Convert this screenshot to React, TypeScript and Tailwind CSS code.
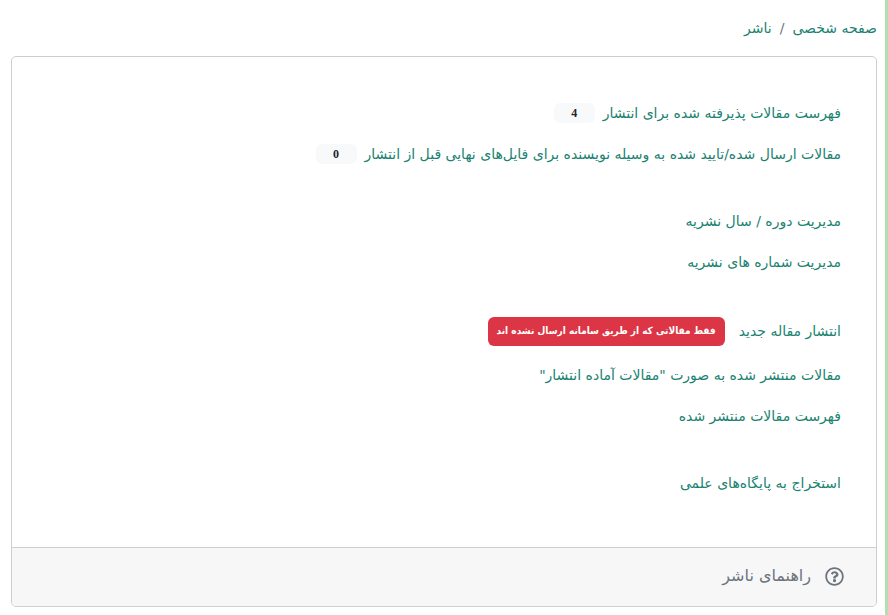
import {FaRegQuestionCircle} from "react-icons/fa";

type MenuItem = {
    text: string;
    count?: number;
    note?: string;
};

const menuGroups: MenuItem[][] = [
    [
        {text: "فهرست مقالات پذیرفته شده برای انتشار", count: 4},
        {text: "مقالات ارسال شده/تایید شده به وسیله نویسنده برای فایل‌های نهایی قبل از انتشار", count: 0},
    ],
    [
        {text: "مدیریت دوره / سال نشریه"},
        {text: "مدیریت شماره های نشریه"},
    ],
    [
        {text: "انتشار مقاله جدید", note: "فقط مقالاتی که از طریق سامانه ارسال نشده اند"},
        {text: "مقالات منتشر شده به صورت \"مقالات آماده انتشار\""},
        {text: "فهرست مقالات منتشر شده"},
    ],
    [
        {text: "استخراج به پایگاه‌های علمی"},
    ],
];

const MenuRow = ({text, count, note}: MenuItem) => (
    <li className={note ? "flex h-[46px] items-center gap-[14px]" : "flex h-[41px] items-center gap-2"}>
        <a href="#" className="whitespace-nowrap text-[#1a8270]">{text}</a>
        {count !== undefined && (
            <span
                className="flex h-5 w-[41px] items-center justify-center rounded-md bg-[#f8f9fa] font-['Liberation_Serif',serif] text-xs font-bold text-[#212529]">
                {count}
            </span>
        )}
        {note && (
            <button type="button"
                    className="h-[29px] whitespace-nowrap rounded-md bg-[#dc3545] px-[9px] font-['DejaVu_Sans_Condensed','DejaVu_Sans',sans-serif] text-[10px] font-bold text-white">
                {note}
            </button>
        )}
    </li>
);

const App = () => {
    return (
        <div dir="rtl"
             className="min-h-screen border-r-[3px] border-[#b1dfb1] bg-white pr-2 pl-[11px] font-['DejaVu_Sans',sans-serif] text-sm">
            <nav className="flex h-14 items-center gap-2 text-[#1a8270]">
                <a href="#">صفحه شخصی</a>
                <span className="text-[#6c757d]">/</span>
                <a href="#">ناشر</a>
            </nav>

            <main className="overflow-hidden rounded-[5px] border border-[#cecece]">
                <div className="flex flex-col gap-[26px] px-[35px] pt-[35px] pb-11">
                    {menuGroups.map((group, index) => (
                        <ul key={index}>
                            {group.map(item => <MenuRow key={item.text} {...item}/>)}
                        </ul>
                    ))}
                </div>

                <footer
                    className="flex h-[59px] items-center gap-[14px] border-t border-[#cecece] bg-[#f7f7f7] px-8 pb-[2px] text-base text-[#6c757d]">
                    <FaRegQuestionCircle size={19}/>
                    <h2>راهنمای ناشر</h2>
                </footer>
            </main>
        </div>
    );
};

export default App;
